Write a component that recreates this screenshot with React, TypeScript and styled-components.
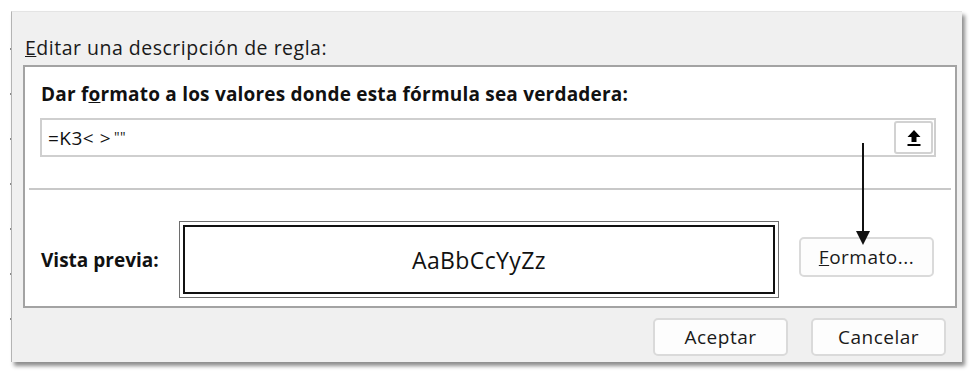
import React from 'react'
import styled, { createGlobalStyle } from 'styled-components'

const GlobalStyle = createGlobalStyle`
    html, body {
        margin: 0;
        padding: 0;
        background: #ffffff;
        font-family: "Open Sans", "Noto Sans", sans-serif;
        color: #000;
    }
`

const UploadIcon = () => (
    <svg width="16" height="18" viewBox="0 0 16 18">
        <path d="M8 1 L14.5 8 L10.5 8 L10.5 13 L5.5 13 L5.5 8 L1.5 8 Z" fill="#000" />
        <rect x="1.5" y="15" width="13" height="2" fill="#000" />
    </svg>
)

const App = () => {
    return(
        <Page>
            <GlobalStyle />
            <Dialog>
                <Title><u>E</u>ditar una descripción de regla:</Title>
                <Panel>
                    <RuleHeading>Dar f<u>o</u>rmato a los valores donde esta fórmula sea verdadera:</RuleHeading>
                    <FormulaField>
                        <FormulaText>=K3&lt; &gt;<Quotes>""</Quotes></FormulaText>
                        <CollapseButton><UploadIcon /></CollapseButton>
                    </FormulaField>
                    <Separator />
                    <PreviewRow>
                        <PreviewLabel>Vista previa:</PreviewLabel>
                        <PreviewFrame>
                            <PreviewInner>AaBbCcYyZz</PreviewInner>
                        </PreviewFrame>
                        <FormatButton $width={135} $height={40}><u>F</u>ormato...</FormatButton>
                    </PreviewRow>
                </Panel>
                <Footer>
                    <DialogButton $width={135} $height={38}>Aceptar</DialogButton>
                    <DialogButton $width={135} $height={38}>Cancelar</DialogButton>
                </Footer>
                <Pointer>
                    <PointerLine />
                    <PointerHead />
                </Pointer>
            </Dialog>
        </Page>
    )
}

const Page = styled.div`
    width: 980px;
    height: 380px;
    padding: 11px 0 0 11px;
    box-sizing: border-box;
`

const Dialog = styled.div`
    position: relative;
    width: 951px;
    height: 351px;
    box-sizing: border-box;
    background: #f0f0f0;
    border-left: 1px solid #b4b4b4;
    border-top: 1px solid #e4e4e4;
    box-shadow: 3px 4px 4px rgba(0, 0, 0, 0.45);
    padding: 0 5px 0 11px;
    display: flex;
    flex-flow: column nowrap;

    &::before{
        content: '';
        position: absolute;
        left: -2px;
        top: 36px;
        width: 1px;
        height: 300px;
        background: repeating-linear-gradient(to bottom, #8a8a8a 0 2px, transparent 2px 45px);
    }
`

const Title = styled.div`
    height: 53px;
    padding: 23px 0 0 2px;
    box-sizing: border-box;
    font-size: 19.5px;
    line-height: 26px;
    letter-spacing: 0.5px;
    color: #1a1a1a;
`

const Panel = styled.div`
    height: 243px;
    box-sizing: border-box;
    background: #fff;
    border: 2px solid #a3a3a3;
    display: flex;
    flex-flow: column nowrap;
    padding: 0 2px;
`

const RuleHeading = styled.div`
    font-weight: 700;
    font-size: 19px;
    line-height: 26px;
    letter-spacing: 0.2px;
    padding: 14px 0 0 14px;
    color: #111;
`

const FormulaField = styled.div`
    margin: 11px 17px 0 13px;
    height: 39px;
    box-sizing: border-box;
    border: 2px solid #cfcfcf;
    display: flex;
    align-items: center;
    justify-content: space-between;
    padding: 0 1px 0 6px;
`

const FormulaText = styled.span`
    font-size: 19px;
    letter-spacing: 0.5px;
    color: #111;
`

const Quotes = styled.span`
    font-size: 14px;
    vertical-align: 3px;
    margin-left: 3px;
`

const CollapseButton = styled.div`
    width: 39px;
    height: 33px;
    box-sizing: border-box;
    border: 2px solid #d2d2d2;
    border-radius: 3px;
    background: #fff;
    display: flex;
    align-items: center;
    justify-content: center;
`

const Separator = styled.div`
    margin: 31px 2px 0 2px;
    height: 2px;
    background: #c8c8c8;
`

const PreviewRow = styled.div`
    display: flex;
    align-items: center;
    margin-top: 31px;
    padding-left: 14px;
`

const PreviewLabel = styled.div`
    width: 138px;
    font-weight: 700;
    font-size: 19px;
    color: #111;
`

const PreviewFrame = styled.div`
    width: 600px;
    height: 77px;
    box-sizing: border-box;
    border: 1px solid #6e6e6e;
    padding: 3px;
    margin-right: 20px;
`

const PreviewInner = styled.div`
    height: 100%;
    box-sizing: border-box;
    border: 2px solid #111;
    display: flex;
    align-items: center;
    justify-content: center;
    font-size: 23px;
    letter-spacing: 0.4px;
    color: #111;
`

const DialogButton = styled.div<{ $width: number; $height: number }>`
    width: ${p => p.$width}px;
    height: ${p => p.$height}px;
    box-sizing: border-box;
    border: 2px solid #dadada;
    border-radius: 5px;
    background: #fdfdfd;
    display: flex;
    align-items: center;
    justify-content: center;
    font-size: 19px;
    letter-spacing: 0.5px;
    color: #1a1a1a;
`

const FormatButton = styled(DialogButton)`
    margin-bottom: 6px;
`

const Footer = styled.div`
    display: flex;
    justify-content: flex-end;
    gap: 23px;
    margin-top: 10px;
    padding-right: 11px;
`

const Pointer = styled.div`
    position: absolute;
    left: 843px;
    top: 131px;
    width: 15px;
    height: 102px;
    display: flex;
    flex-flow: column nowrap;
    align-items: center;
`

const PointerLine = styled.div`
    width: 2px;
    flex: 1 1 auto;
    background: #111;
`

const PointerHead = styled.div`
    width: 0;
    height: 0;
    border-left: 7.5px solid transparent;
    border-right: 7.5px solid transparent;
    border-top: 14px solid #111;
`

export default App
